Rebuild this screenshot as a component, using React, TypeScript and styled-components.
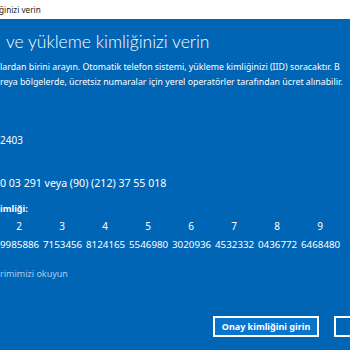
import React from 'react';
import styled, { createGlobalStyle } from 'styled-components';

const GlobalStyle = createGlobalStyle`
  html, body {
    margin: 0;
    padding: 0;
    width: 350px;
    height: 350px;
    overflow: hidden;
    background: #0065b5;
  }
  * {
    box-sizing: border-box;
  }
`;

const digits = ['2', '3', '4', '5', '6', '7', '8', '9'];
const groups = [
  '9985886',
  '7153456',
  '8124165',
  '5546980',
  '3020936',
  '4532332',
  '0436772',
  '6468480',
];

function App(): JSX.Element {
  return (
    <>
      <GlobalStyle />
      <WindowSt>
        <TitleBarSt>ğinizi verin</TitleBarSt>
        <ContentSt>
          <HeadingSt>ve yükleme kimliğinizi verin</HeadingSt>
          <ParagraphSt>
            <LineSt $size={8.8}>
              lardan birini arayın. Otomatik telefon sistemi, yükleme kimliğinizi
              (IID) soracaktır. B
            </LineSt>
            <LineSt $size={8.8}>
              reya bölgelerde, ücretsiz numaralar için yerel operatörler
              tarafından ücret alınabilir.
            </LineSt>
          </ParagraphSt>
          <LineSt $top={43}>2403</LineSt>
          <LineSt $top={28} $size={10.6}>
            0 03 291 veya (90) (212) 37 55 018
          </LineSt>
          <LabelSt>imliği:</LabelSt>
          <IdGridSt>
            {digits.map((d, i) => (
              <IdColumnSt key={d}>
                <IdIndexSt>{d}</IdIndexSt>
                <IdValueSt>{groups[i]}</IdValueSt>
              </IdColumnSt>
            ))}
          </IdGridSt>
          <LinkSt>rimimizi okuyun</LinkSt>
          <FooterSt>
            <ButtonSt>Onay kimliğini girin</ButtonSt>
            <ButtonSt $ghost>&nbsp;</ButtonSt>
          </FooterSt>
        </ContentSt>
      </WindowSt>
    </>
  );
}

const WindowSt = styled.div`
  display: flex;
  flex-direction: column;
  width: 350px;
  height: 350px;
  overflow: hidden;
  font-family: 'Noto Sans', 'Open Sans', sans-serif;
  color: #ffffff;
`;
const TitleBarSt = styled.div`
  display: flex;
  align-items: center;
  height: 19px;
  margin-left: -1px;
  background: #ffffff;
  color: #1a1a1a;
  font-size: 8.2px;
  white-space: nowrap;
`;
const ContentSt = styled.div`
  display: flex;
  flex-direction: column;
  flex: 1;
  background: #0065b5;
`;
const HeadingSt = styled.h1`
  margin: 9px 0 0 6px;
  font-family: Lato, 'Noto Sans', sans-serif;
  font-size: 17.5px;
  font-weight: 300;
  line-height: 28px;
  white-space: nowrap;
`;
const ParagraphSt = styled.div`
  display: flex;
  flex-direction: column;
  margin-top: 4px;
`;
const LineSt = styled.div<{ $top?: number; $size?: number }>`
  margin-top: ${({ $top }) => $top ?? 0}px;
  font-size: ${({ $size }) => $size ?? 10}px;
  line-height: 15px;
  white-space: nowrap;
`;
const LabelSt = styled(LineSt)`
  margin-top: 10px;
  font-size: 9px;
  font-weight: 700;
`;
const IdGridSt = styled.div`
  display: grid;
  grid-template-columns: repeat(8, 43px);
  margin-top: 3px;
`;
const IdColumnSt = styled.div`
  display: flex;
  flex-direction: column;
  gap: 3px;
`;
const IdIndexSt = styled.span`
  padding-right: 5px;
  font-size: 10px;
  line-height: 15px;
  text-align: center;
`;
const IdValueSt = styled.span`
  font-size: 9.8px;
  line-height: 15px;
  white-space: nowrap;
`;
const LinkSt = styled(LineSt)`
  margin-top: 14px;
  font-size: 9px;
  color: #a9cdf0;
`;
const FooterSt = styled.div`
  display: flex;
  gap: 15px;
  margin-top: 35px;
  padding-left: 213px;
`;
const ButtonSt = styled.button<{ $ghost?: boolean }>`
  flex-shrink: 0;
  width: 106px;
  height: 21px;
  padding: 0;
  border: 2px solid #ffffff;
  background: ${({ $ghost }) => ($ghost ? '#0065b5' : '#0a74cc')};
  color: #ffffff;
  font-family: 'Noto Sans', 'Open Sans', sans-serif;
  font-size: 9px;
  font-weight: 700;
`;

export default App;
